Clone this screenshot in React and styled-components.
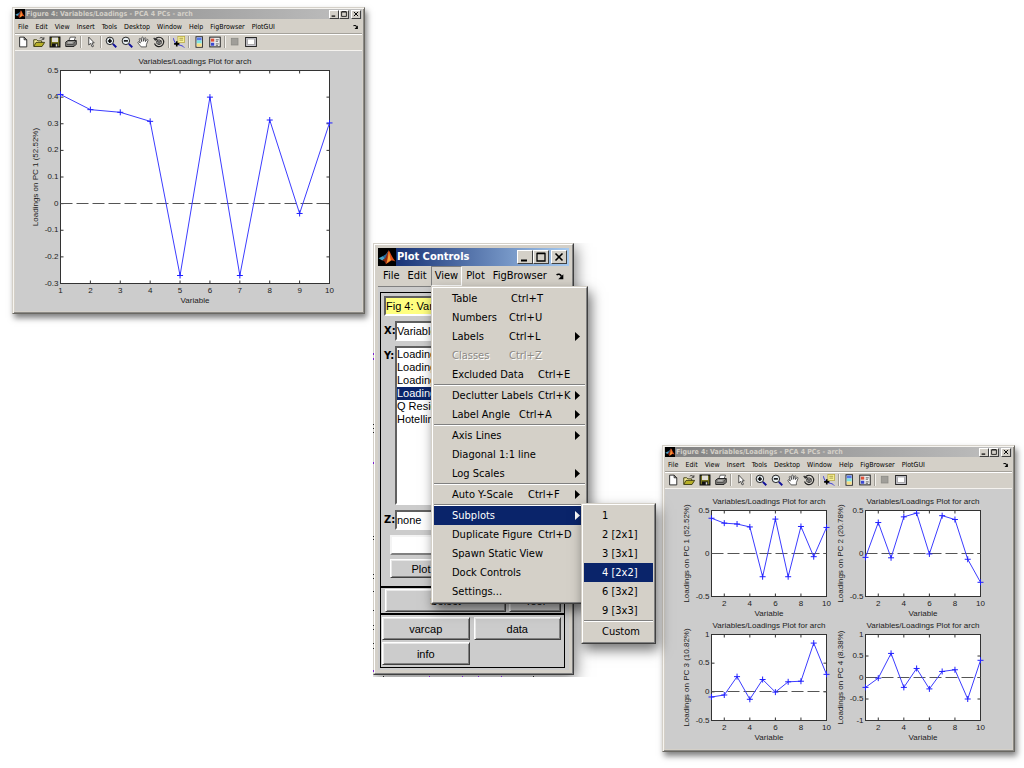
import React from 'react';
import styled, { createGlobalStyle, css } from 'styled-components';

const uiFont = '"DejaVu Sans Condensed", "DejaVu Sans", sans-serif';
const plotFont = '"Liberation Sans", Arial, sans-serif';

const GlobalStyle = createGlobalStyle`
  * {
    box-sizing: border-box;
  }

  body {
    margin: 0;
    background: #fff;
    font-family: ${uiFont};
    color: #000;
  }

  button, input, select {
    margin: 0;
    padding: 0;
    border: 0;
    border-radius: 0;
    outline: 0;
    font: inherit;
    color: inherit;
  }

  svg {
    display: block;
  }
`;

const Desktop = styled.main`
  position: relative;
  min-height: 100vh;
  overflow: hidden;
`;

/* ---------- figure windows ---------- */

const FigureFrame = styled.section`
  position: absolute;
  left: ${({left}) => left}px;
  top: ${({top}) => top}px;
  width: 353px;
  padding: 1px 2px 2px 2px;
  border: 1px solid #d4d0c8;
  border-right-color: #6a6862;
  border-bottom-color: #6a6862;
  background: #d4d0c8;
  box-shadow: inset 1px 1px 0 #f6f4f0, inset -1px -1px 0 #8c8a86, 2px 4px 6px rgba(0, 0, 0, 0.5);
`;

const TitleBar = styled.header`
  display: flex;
  align-items: center;
  height: ${({$large}) => ($large ? 18 : 10)}px;
  padding: 0 ${({$large}) => ($large ? 2 : 1)}px 0 0;
  background: ${({$large}) => ($large
    ? 'linear-gradient(90deg, #0a246a, #a6caf0)'
    : 'linear-gradient(90deg, #808080, #c0c0c0)')};
`;

const TitleText = styled.h1`
  flex: 1;
  margin: 0 0 0 1px;
  overflow: hidden;
  white-space: nowrap;
  font-weight: bold;
  font-size: ${({$large}) => ($large ? 11 : 7)}px;
  line-height: ${({$large}) => ($large ? 18 : 10)}px;
  color: ${({$large}) => ($large ? '#fff' : '#d4d0c8')};
`;

const CaptionButton = styled.button`
  display: flex;
  align-items: center;
  justify-content: center;
  width: ${({$large}) => ($large ? 16 : 10)}px;
  height: ${({$large}) => ($large ? 14 : 9)}px;
  background: #d4d0c8;
  border: 1px solid #fff;
  border-right-color: #404040;
  border-bottom-color: #404040;

  &:last-child {
    margin-left: 2px;
  }
`;

const MenuBar = styled.nav`
  display: flex;
  align-items: center;
  height: 15px;
  padding: 1px 3px 0 3px;
  gap: 7px;
  border-bottom: 1px solid #a5a29b;
`;

const SmallMenu = styled.button`
  background: none;
  font-size: 7px;
  line-height: 12px;
`;

const DockButton = styled.button`
  margin-left: auto;
  background: none;
`;

const ToolBar = styled.div`
  display: flex;
  align-items: center;
  height: 17px;
  padding-bottom: 2px;
  border-top: 1px solid #fff;
  border-bottom: 1px solid #f4f2ee;
`;

const ToolButton = styled.button`
  display: flex;
  align-items: center;
  justify-content: center;
  width: 16px;
  height: 12px;
  background: none;
`;

const ToolSeparator = styled.span`
  width: 2px;
  height: 12px;
  margin: 0 1px;
  border-left: 1px solid #a09d96;
  border-right: 1px solid #f4f2ee;
`;

const Canvas = styled.div`
  background: #ccc;

  svg {
    width: 100%;
    height: auto;
  }

  text {
    font-family: ${plotFont};
    font-size: 8px;
    fill: #222;
  }
`;

/* ---------- plot controls window ---------- */

const ControlsArea = styled.div`
  position: absolute;
  left: 373px;
  top: 243px;
  width: 232px;
  height: 434px;
  overflow: hidden;
`;

const Specks = styled.svg`
  position: absolute;
  left: 0;
  top: 0;
`;

const ControlsFrame = styled.section`
  width: 201px;
  padding: 3px;
  border: 1px solid #d4d0c8;
  border-right-color: #404040;
  border-bottom-color: #404040;
  background: #d4d0c8;
  box-shadow: 2px 4px 14px rgba(0, 0, 0, 0.5);
`;

const Bevel = styled.div`
  padding: 3px;
  margin: -3px;
  border: 1px solid #fff;
  border-right-color: #808080;
  border-bottom-color: #808080;
`;

const ControlsMenuBar = styled.nav`
  display: flex;
  align-items: center;
  height: 21px;
  padding-left: 1px;
  border-bottom: 1px solid #808080;
  font-size: 11px;
`;

const BigMenu = styled.button`
  height: 20px;
  padding: 0 3px;
  background: none;
  border: 1px solid transparent;
  line-height: 18px;

  ${({$open}) => $open && css`
    border-color: #808080 #fff #fff #808080;
  `}

  &:last-child {
    margin-left: auto;
  }
`;

const ControlsBody = styled.form`
  padding: 5px 4px 2px 2px;
  background: #ccc;
  font-family: ${plotFont};
  font-size: 11px;
`;

const PanelStack = styled.div`
  border: 1px solid #000;
`;

const Panel = styled.div`
  border-bottom: ${({$last}) => ($last ? 0 : 2)}px solid #000;
`;

const Fields = styled.div`
  display: flex;
  flex-direction: column;
  gap: 5px;
  padding: 3px;
`;

const FieldRow = styled.div`
  display: flex;
  align-items: flex-start;
`;

const FieldLabel = styled.label`
  width: 11px;
  font-family: ${uiFont};
  font-weight: bold;
  line-height: 20px;
`;

const sunken = css`
  border: 2px solid #404040;
  border-color: #606060 #fff #fff #606060;
`;

const FigureSelect = styled.select`
  ${sunken}
  width: 176px;
  height: 20px;
  appearance: none;
  background: ${({$yellow}) => ($yellow ? '#ffff80' : '#fff')};
`;

const ListBox = styled.select`
  ${sunken}
  flex: 1;
  height: 159px;
  overflow: hidden;
  background: #fff;

  option {
    height: 13px;
    min-height: 13px;
    padding: 0;
    line-height: 13px;
  }

  option:checked {
    color: #fff;
    background: #0a246a linear-gradient(#0a246a, #0a246a);
  }
`;

const Actions = styled.div`
  display: flex;
  flex-direction: column;
  gap: 4px;
  padding: 2px 9px 8px 9px;
`;

const BlankInput = styled.input`
  height: 20px;
  background: #fff;
  border: 2px solid #fff;
  border-color: #f4f4f4 #808080 #808080 #f4f4f4;
`;

const PushButton = styled.button`
  height: ${({$short}) => ($short ? 19 : 23)}px;
  background: #ccc;
  border: 1px solid #fff;
  border-right-color: #404040;
  border-bottom-color: #404040;
  box-shadow: inset 1px 1px 0 #e8e8e8, inset -1px -1px 0 #808080;
  font-size: 11px;
  line-height: 14px;
`;

const PlotButton = styled(PushButton)`
  width: 62px;
`;

const SelectRow = styled.div`
  display: grid;
  grid-template-columns: 121px 52px;
  gap: 3px;
  padding: 1px 4px;
`;

const ButtonGrid = styled.div`
  display: grid;
  grid-template-columns: 1fr 1fr;
  column-gap: 4px;
  row-gap: 2px;
  padding: 2px 3px 2px 1px;
`;

/* ---------- popup menus ---------- */

const Popup = styled.div`
  position: absolute;
  left: ${({left}) => left}px;
  top: ${({top}) => top}px;
  width: ${({width}) => width}px;
  padding: 1px;
  border: 1px solid #d4d0c8;
  border-right-color: #404040;
  border-bottom-color: #404040;
  background: #d4d0c8;
  box-shadow: 3px 6px 12px rgba(0, 0, 0, 0.55);
`;

const PopupInner = styled.div`
  margin: -1px;
  padding: 1px;
  border: 1px solid #fff;
  border-right-color: #808080;
  border-bottom-color: #808080;
`;

const Item = styled.button`
  display: flex;
  align-items: center;
  width: 100%;
  height: 19px;
  padding: 0 5px 0 18px;
  background: ${({$active}) => ($active ? '#0a246a' : 'transparent')};
  color: ${({$active}) => ($active ? '#fff' : '#000')};
  font-size: 11px;
  line-height: 19px;
  text-align: left;
  white-space: nowrap;

  &:disabled {
    color: #8c8a86;
    text-shadow: 1px 1px 0 #fff;
  }
`;

const ItemLabel = styled.span`
  width: ${({$tab}) => ($tab ? `${$tab}px` : 'auto')};
`;

const ItemArrow = styled.svg`
  margin-left: auto;
`;

const Rule = styled.hr`
  height: 2px;
  margin: 0;
  border: 0;
  border-top: 1px solid #808080;
  border-bottom: 1px solid #fff;
`;

/* ---------- icons ---------- */

const Logo = ({size}) => (
  <svg width={size} height={size} viewBox="0 0 16 16" aria-hidden="true">
    <rect width="16" height="16" fill="#000"/>
    <path d="M0.5 9 L4.5 7 L6.5 9 L3.8 11 Z" fill="#4aa3c8"/>
    <path d="M4.5 7 L7 5.5 L9.5 2 L7.5 8.5 L6 10 Z" fill="#2b6a9c"/>
    <path d="M3.8 11 L6.5 8.8 L9.5 2 L8.5 11 L6.8 14 L5.5 11.5 Z" fill="#8a2a12"/>
    <path d="M9.5 2 C11 3.5 12 8 15.5 12 C13 10.8 11.5 10.5 10 12.5 L6.8 14.5 C8.5 11 8.5 5 9.5 2 Z" fill="#e0501c"/>
    <path d="M9.6 3 C10.5 6 10.8 9 11.5 10.8 C10 11 9 12.5 7.6 13.6 C9 10 9.2 6 9.6 3 Z" fill="#f8a63a"/>
  </svg>
);

const CaptionGlyph = ({kind, size}) => (
  <svg width={size} height={size} viewBox="0 0 10 10" fill="none" stroke="#000" aria-hidden="true">
    {kind === 'Minimize' && <path d="M1 8.5H7" strokeWidth="2"/>}
    {kind === 'Maximize' && <path d="M1 1.5H9V9H1Z M1 1.2H9" strokeWidth="1.3"/>}
    {kind === 'Close' && <path d="M1.5 1.5L8.5 8.5M8.5 1.5L1.5 8.5" strokeWidth="1.6"/>}
  </svg>
);

const DockIcon = ({size}) => (
  <svg width={size} height={size} viewBox="0 0 8 8" aria-hidden="true">
    <path d="M0.5 2.6 C2 1.4 3.8 2 4.8 3.8" fill="none" stroke="#000" strokeWidth="1.4"/>
    <path d="M6.5 2V6.5H2Z" fill="#000"/>
  </svg>
);

const icons = {
  'New Figure': <path d="M3.5 1.5H9.5L13 5V14.5H3.5Z M9.5 1.5V5H13" fill="#fff" stroke="#222" strokeWidth="1.2"/>,
  'Open File': (
    <g>
      <path d="M1 13.5V5H5L6.5 6.5H11.5V9" fill="#f7ee9a" stroke="#3a3a10" strokeWidth="1.2"/>
      <path d="M1 14L4 8.5H15.5L12 14Z" fill="#b8b028" stroke="#3a3a10" strokeWidth="1.2"/>
      <path d="M9 3C11 1.2 13 2 14 4M14.5 1.5V4.5H11.5" fill="none" stroke="#222"/>
    </g>
  ),
  'Save Figure': (
    <g>
      <path d="M1.5 1.5H14.5V14.5H1.5Z" fill="#77751f" stroke="#111" strokeWidth="1.6"/>
      <rect x="4" y="2" width="8" height="6" fill="#e2e0da"/>
      <rect x="4" y="10" width="8" height="4.5" fill="#111"/>
      <rect x="9" y="11" width="2" height="3" fill="#ddd"/>
    </g>
  ),
  'Print Figure': (
    <g>
      <path d="M5 6.5L7 1.5H14L12 6.5" fill="#fff" stroke="#333"/>
      <path d="M1 8L4 6H15V11L12 14H1Z" fill="#8c8b87" stroke="#222" strokeWidth="1.3"/>
      <path d="M2.5 11.5H11M12 13V9L15 6.5" fill="none" stroke="#333"/>
      <path d="M4 9H10" stroke="#ddd"/>
    </g>
  ),
  'Edit Plot': <path d="M5 1.5V12L7.5 9.8L9.5 14.5L11.3 13.7L9.3 9.2H12.3Z" fill="#fff" stroke="#222"/>,
  'Zoom In': (
    <g fill="none">
      <circle cx="6.5" cy="6.5" r="5" fill="#e8f0f4" stroke="#222" strokeWidth="1.3"/>
      <path d="M10.5 10.5L15 15" stroke="#10109a" strokeWidth="2.6"/>
      <path d="M3.8 6.5H9.2M6.5 3.8V9.2" stroke="#000" strokeWidth="2"/>
    </g>
  ),
  'Zoom Out': (
    <g fill="none">
      <circle cx="6.5" cy="6.5" r="5" fill="#e8f0f4" stroke="#222" strokeWidth="1.3"/>
      <path d="M10.5 10.5L15 15" stroke="#10109a" strokeWidth="2.6"/>
      <path d="M3.8 6.5H9.2" stroke="#000" strokeWidth="2"/>
    </g>
  ),
  Pan: (
    <path
      d="M5.5 14.5L1.5 9.5C0.5 8 2 7 3 8L4.5 9.5L3 4.5C2.8 3 4.5 2.6 5 4L6.3 7.5L6.3 2.5C6.4 1 8.2 1 8.4 2.5L8.8 7L10 3C10.5 1.7 12 2.2 11.8 3.5L11.2 7.5L13 5C13.8 4 15.2 4.8 14.6 6L12.5 11.5V14.5Z"
      fill="#fff" stroke="#333"
    />
  ),
  'Rotate 3D': (
    <g fill="none" stroke="#222">
      <path d="M3 4A6.3 6.3 0 1 1 2 10" strokeWidth="1.5"/>
      <path d="M1 2.5L3 5.5L6 4" strokeWidth="1.5"/>
      <path d="M5 6.5L8 5L11 6.5V10L8 11.5L5 10Z M5 6.5L8 8L11 6.5M8 8V11.5" fill="#aaa"/>
    </g>
  ),
  'Data Cursor': (
    <g fill="none">
      <rect x="6.5" y="0.5" width="9" height="8" fill="#f8f29a" stroke="#b8a840"/>
      <path d="M8.5 3H13.5M8.5 5.5H13.5" stroke="#8f8430"/>
      <path d="M0.5 3C2 9 4 11 8 12S13 13 15 15.5" stroke="#3838d8" strokeWidth="1.3"/>
      <path d="M5 7V14M1.5 10.5H8.5" stroke="#000" strokeWidth="2.2"/>
    </g>
  ),
  'Insert Colorbar': (
    <g>
      <rect x="4" y="1" width="8.5" height="14" fill="#fff" stroke="#222" strokeWidth="1.3"/>
      <rect x="5" y="2" width="6.5" height="4" fill="#5578e8"/>
      <rect x="5" y="6" width="6.5" height="4" fill="#7ce4e0"/>
      <rect x="5" y="10" width="6.5" height="4" fill="#f6dd80"/>
    </g>
  ),
  'Insert Legend': (
    <g>
      <rect x="1" y="1.5" width="14" height="13" fill="#eee" stroke="#222" strokeWidth="1.3"/>
      <rect x="2.5" y="3.5" width="4.5" height="4" fill="#e05038"/>
      <rect x="2.5" y="9" width="4.5" height="4" fill="#3c48d0"/>
      <path d="M9 5H13M9 7H12M9 10.5H13M9 12.5H12" stroke="#444"/>
    </g>
  ),
  'Hide Plot Tools': <rect x="3" y="3" width="9" height="9" fill="#a09e99" stroke="#8a8883"/>,
  'Show Plot Tools': (
    <g>
      <rect x="0.8" y="2" width="14.4" height="12" fill="#c9c8d0" stroke="#222" strokeWidth="1.3"/>
      <rect x="3.5" y="4" width="9" height="7.5" fill="#fff" stroke="#999"/>
    </g>
  ),
};

const toolGroups = [
  ['New Figure', 'Open File', 'Save Figure', 'Print Figure'],
  ['Edit Plot'],
  ['Zoom In', 'Zoom Out', 'Pan', 'Rotate 3D'],
  ['Data Cursor'],
  ['Insert Colorbar', 'Insert Legend'],
  ['Hide Plot Tools', 'Show Plot Tools'],
];

const figureMenus = ['File', 'Edit', 'View', 'Insert', 'Tools', 'Desktop', 'Window', 'Help', 'FigBrowser', 'PlotGUI'];

/* ---------- plots ---------- */

const pc1 = [0.41, 0.353, 0.343, 0.309, -0.27, 0.4, -0.27, 0.314, -0.037, 0.303];
const pc2 = [-0.045, 0.36, -0.05, 0.426, 0.47, -0.005, 0.44, 0.395, -0.067, -0.335];
const pc3 = [-0.09, -0.055, 0.265, -0.13, 0.215, -0.005, 0.175, 0.185, 0.85, 0.305];
const pc4 = [-0.23, -0.015, 0.56, -0.23, 0.21, -0.265, 0.14, 0.18, -0.5, 0.4];

const Axes = ({x, y, w, h, xTicks, yTicks, data, label}) => {
  const min = yTicks[0];
  const max = yTicks[yTicks.length - 1];
  const px = v => x + ((v - 1) / 9) * w;
  const py = v => y + h - ((v - min) / (max - min)) * h;
  const points = data.map((v, i) => [px(i + 1), py(v)]);

  return (
    <g>
      <rect x={x} y={y} width={w} height={h} fill="#fff" stroke="#333"/>
      {xTicks.map(t => (
        <g key={t}>
          <path d={`M${px(t)} ${y}v3M${px(t)} ${y + h}v-3`} stroke="#333"/>
          <text x={px(t)} y={y + h + 9} textAnchor="middle">{t}</text>
        </g>
      ))}
      {yTicks.map(t => (
        <g key={t}>
          <path d={`M${x} ${py(t)}h3M${x + w} ${py(t)}h-3`} stroke="#333"/>
          <text x={x - 2} y={py(t) + 2} textAnchor="end">{t}</text>
        </g>
      ))}
      <path d={`M${x} ${Math.floor(py(0)) + 0.5}h${w}`} stroke="#555" strokeDasharray="12 4"/>
      <polyline points={points.map(p => p.join(',')).join(' ')} fill="none" stroke="#3c3cff"/>
      {points.map(([cx, cy]) => (
        <path key={cx} d={`M${cx - 3} ${cy}h6M${cx} ${cy - 3}v6`} stroke="#2020ff"/>
      ))}
      <text x={x + w / 2} y={y - 7} textAnchor="middle">Variables/Loadings Plot for arch</text>
      <text x={x + w / 2} y={y + h + 19} textAnchor="middle">Variable</text>
      <text transform={`translate(${x - 23} ${y + h / 2}) rotate(-90)`} textAnchor="middle">{label}</text>
    </g>
  );
};

const SinglePlot = () => (
  <svg viewBox="0 0 347 260" role="img" aria-label="Loadings on PC 1">
    <Axes
      x={45.5} y={19.5} w={269} h={213}
      xTicks={[1, 2, 3, 4, 5, 6, 7, 8, 9, 10]}
      yTicks={[-0.3, -0.2, -0.1, 0, 0.1, 0.2, 0.3, 0.4, 0.5]}
      data={pc1}
      label="Loadings on PC 1 (52.52%)"
    />
  </svg>
);

const quad = [
  {x: 46.5, y: 21.5, yTicks: [-0.5, 0, 0.5], data: pc1, label: 'Loadings on PC 1 (52.52%)'},
  {x: 200.5, y: 21.5, yTicks: [-0.5, 0, 0.5], data: pc2, label: 'Loadings on PC 2 (20.78%)'},
  {x: 46.5, y: 145.5, yTicks: [-0.5, 0, 0.5, 1], data: pc3, label: 'Loadings on PC 3 (10.82%)'},
  {x: 200.5, y: 145.5, yTicks: [-1, -0.5, 0, 0.5, 1], data: pc4, label: 'Loadings on PC 4 (8.38%)'},
];

const QuadPlot = () => (
  <svg viewBox="0 0 347 260" role="img" aria-label="Loadings on PC 1 to 4">
    {quad.map(axes => (
      <Axes key={axes.label} w={115} h={86} xTicks={[2, 4, 6, 8, 10]} {...axes}/>
    ))}
  </svg>
);

const Caption = ({title, large}) => (
  <TitleBar $large={large}>
    <Logo size={large ? 18 : 10}/>
    <TitleText $large={large}>{title}</TitleText>
    {['Minimize', 'Maximize', 'Close'].map(kind => (
      <CaptionButton key={kind} type="button" $large={large} aria-label={kind}>
        <CaptionGlyph kind={kind} size={large ? 10 : 6}/>
      </CaptionButton>
    ))}
  </TitleBar>
);

const FigureWindow = ({left, top, children}) => (
  <FigureFrame left={left} top={top}>
    <Caption title="Figure 4: Variables/Loadings - PCA 4 PCs - arch"/>
    <MenuBar>
      {figureMenus.map(name => <SmallMenu key={name} type="button">{name}</SmallMenu>)}
      <DockButton type="button" aria-label="Dock figure"><DockIcon size={6}/></DockButton>
    </MenuBar>
    <ToolBar>
      {toolGroups.map((group, i) => (
        <React.Fragment key={group[0]}>
          {i > 0 && <ToolSeparator/>}
          {group.map(name => (
            <ToolButton key={name} type="button" aria-label={name}>
              <svg width="12" height="12" viewBox="0 0 16 16" aria-hidden="true">{icons[name]}</svg>
            </ToolButton>
          ))}
        </React.Fragment>
      ))}
    </ToolBar>
    <Canvas>{children}</Canvas>
  </FigureFrame>
);

const yItems = [
  'Loadings on PC 1',
  'Loadings on PC 2',
  'Loadings on PC 3',
  'Loadings on PC 4',
  'Q Residuals',
  'Hotelling T^2',
];

const PlotControls = () => (
  <ControlsArea>
    <ControlsFrame>
      <Bevel>
        <Caption title="Plot Controls" large/>
        <ControlsMenuBar>
          <BigMenu type="button">File</BigMenu>
          <BigMenu type="button">Edit</BigMenu>
          <BigMenu type="button" $open>View</BigMenu>
          <BigMenu type="button">Plot</BigMenu>
          <BigMenu type="button">FigBrowser</BigMenu>
          <BigMenu type="button" aria-label="Dock controls"><DockIcon size={9}/></BigMenu>
        </ControlsMenuBar>
        <ControlsBody>
          <PanelStack>
            <Panel>
              <Fields>
                <FigureSelect $yellow aria-label="Figure">
                  <option>Fig 4: Variables/Loadings</option>
                </FigureSelect>
                <FieldRow>
                  <FieldLabel htmlFor="x-axis">X:</FieldLabel>
                  <FigureSelect id="x-axis"><option>Variable</option></FigureSelect>
                </FieldRow>
                <FieldRow>
                  <FieldLabel htmlFor="y-axis">Y:</FieldLabel>
                  <ListBox id="y-axis" multiple defaultValue={['Loadings on PC 4']}>
                    {yItems.map(item => <option key={item}>{item}</option>)}
                  </ListBox>
                </FieldRow>
                <FieldRow>
                  <FieldLabel htmlFor="z-axis">Z:</FieldLabel>
                  <FigureSelect id="z-axis"><option>none</option></FigureSelect>
                </FieldRow>
              </Fields>
              <Actions>
                <BlankInput aria-label="Search"/>
                <PlotButton type="button" $short>Plot</PlotButton>
              </Actions>
            </Panel>
            <Panel>
              <SelectRow>
                <PushButton type="button">Select</PushButton>
                <PushButton type="button">Tool</PushButton>
              </SelectRow>
            </Panel>
            <Panel $last>
              <ButtonGrid>
                <PushButton type="button">varcap</PushButton>
                <PushButton type="button">data</PushButton>
                <PushButton type="button">info</PushButton>
              </ButtonGrid>
            </Panel>
          </PanelStack>
        </ControlsBody>
      </Bevel>
    </ControlsFrame>
    <Specks width="232" height="434" aria-hidden="true">
      <path d="M0.5 110v2M0.5 115v2M0.5 219v2M0.5 427v2" stroke="#7a1fd0"/>
      <path d="M0.5 181v1M0.5 185v1M0.5 189v1M0.5 293v1M0.5 296v1M0.5 331v1M0.5 335v1M0.5 348v1M0.5 367v1M0.5 382v1M0.5 386v1M0.5 400v1M0.5 405v1" stroke="#222"/>
      <path d="M56 433.5h1M89 433.5h1M105 433.5h1M128 433.5h1" stroke="#7a1fd0"/>
      <path d="M10 433.5h1M160 433.5h1" stroke="#222"/>
    </Specks>
  </ControlsArea>
);

const viewMenu = [
  [
    {label: 'Table', keys: 'Ctrl+T', tab: 59},
    {label: 'Numbers', keys: 'Ctrl+U', tab: 57},
    {label: 'Labels', keys: 'Ctrl+L', tab: 57, more: true},
    {label: 'Classes', keys: 'Ctrl+Z', tab: 57, disabled: true},
    {label: 'Excluded Data', keys: 'Ctrl+E', tab: 86},
  ],
  [
    {label: 'Declutter Labels', keys: 'Ctrl+K', tab: 86, more: true},
    {label: 'Label Angle', keys: 'Ctrl+A', tab: 67, more: true},
  ],
  [
    {label: 'Axis Lines', more: true},
    {label: 'Diagonal 1:1 line'},
    {label: 'Log Scales', more: true},
  ],
  [
    {label: 'Auto Y-Scale', keys: 'Ctrl+F', tab: 76, more: true},
  ],
  [
    {label: 'Subplots', more: true, active: true},
    {label: 'Duplicate Figure', keys: 'Ctrl+D', tab: 86},
    {label: 'Spawn Static View'},
    {label: 'Dock Controls'},
    {label: 'Settings...'},
  ],
];

const subplotsMenu = [
  [
    {label: '1'},
    {label: '2 [2x1]'},
    {label: '3 [3x1]'},
    {label: '4 [2x2]', active: true},
    {label: '6 [3x2]'},
    {label: '9 [3x3]'},
  ],
  [{label: 'Custom'}],
];

const PopupMenu = ({left, top, width, groups}) => (
  <Popup left={left} top={top} width={width} role="menu">
    <PopupInner>
      {groups.map((group, i) => (
        <React.Fragment key={group[0].label}>
          {i > 0 && <Rule/>}
          {group.map(item => (
            <Item key={item.label} type="button" role="menuitem" $active={item.active} disabled={item.disabled}>
              <ItemLabel $tab={item.tab}>{item.label}</ItemLabel>
              {item.keys && <span>{item.keys}</span>}
              {item.more && (
                <ItemArrow width="5" height="9" viewBox="0 0 5 9" aria-hidden="true">
                  <path d="M0 0L5 4.5L0 9Z" fill="currentColor"/>
                </ItemArrow>
              )}
            </Item>
          ))}
        </React.Fragment>
      ))}
    </PopupInner>
  </Popup>
);

const App = () => (
  <>
    <GlobalStyle/>
    <Desktop>
      <FigureWindow left={12} top={7}><SinglePlot/></FigureWindow>
      <FigureWindow left={662} top={445}><QuadPlot/></FigureWindow>
      <PlotControls/>
      <PopupMenu left={431} top={286} width={157} groups={viewMenu}/>
      <PopupMenu left={581} top={503} width={75} groups={subplotsMenu}/>
    </Desktop>
  </>
);

export default App;
